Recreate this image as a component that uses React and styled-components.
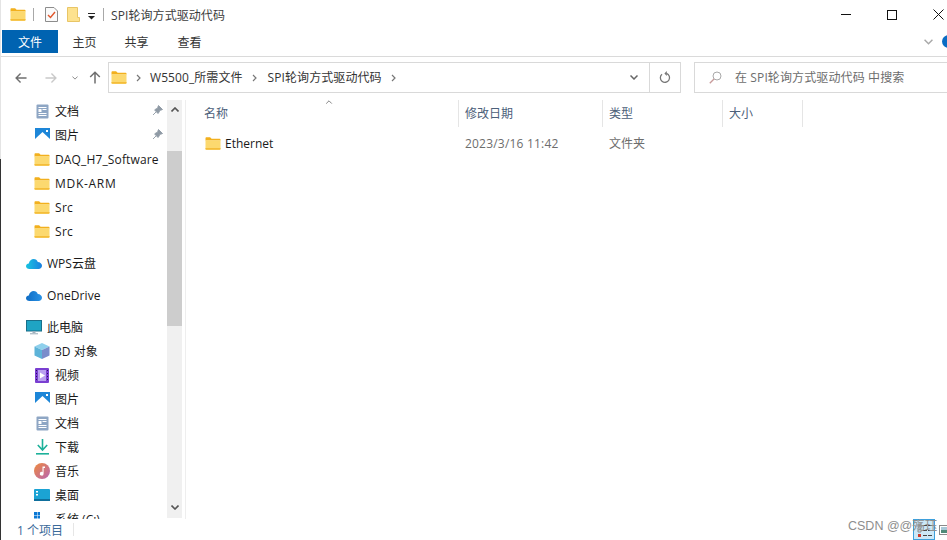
import React from 'react';
import styled, { createGlobalStyle } from 'styled-components';

const GlobalStyle = createGlobalStyle`
html, body {
  margin: 0;
  padding: 0;
  background: #fff;
  overflow: hidden;
}
* { box-sizing: border-box; }
`;

const Page = styled.div`
width: 947px;
height: 540px;
position: relative;
overflow: hidden;
display: flex;
flex-direction: column;
background: #fff;
color: #1a1a1a;
font-family: "Open Sans", "Noto Sans CJK SC", sans-serif;
font-size: 12px;
`;

const LeftEdge = styled.div`
position: absolute;
left: 0;
top: ${p => p.$top}px;
height: ${p => p.$h}px;
width: 1px;
background: ${p => p.$color};
`;

const TitleBar = styled.div`
height: 29px;
flex: none;
display: flex;
align-items: center;
padding-left: 10px;
`;

const TitleDivider = styled.div`
width: 1px;
height: 13px;
background: #a8a8a8;
margin: ${p => p.$margin};
`;

const TitleText = styled.div`
margin-left: 7px;
color: #3c3c3c;
white-space: nowrap;
letter-spacing: .08px;
`;

const WindowButtons = styled.div`
margin-left: auto;
margin-right: -14px;
display: flex;
height: 100%;
`;

const WindowButton = styled.div`
width: 46px;
display: flex;
align-items: center;
justify-content: center;
`;

const RibbonTabs = styled.div`
height: 28px;
flex: none;
display: flex;
align-items: flex-start;
padding: 1px 0 0 2px;
border-bottom: 1px solid #dadada;
position: relative;
`;

const FileTab = styled.div`
width: 56px;
height: 23px;
background: #0063b1;
color: #fff;
display: flex;
align-items: center;
justify-content: center;
`;

const Tab = styled.div`
width: 53px;
height: 23px;
display: flex;
align-items: center;
justify-content: center;
color: #333;
margin-left: ${p => p.$shift || 0}px;
`;

const RibbonEnd = styled.div`
margin-left: auto;
height: 23px;
display: flex;
align-items: center;
gap: 9px;
margin-right: -8px;
`;

const HelpDot = styled.div`
width: 13px;
height: 13px;
border-radius: 50%;
background: #0a6cc4;
`;

const AddressRow = styled.div`
height: 43px;
flex: none;
display: flex;
align-items: flex-start;
padding-top: 5px;
`;

const NavButtons = styled.div`
width: 108px;
height: 31px;
flex: none;
display: flex;
align-items: center;
padding-left: 15px;
`;

const NavSpacer = styled.span`
width: ${p => p.$w}px;
flex: none;
`;

const AddressBox = styled.div`
width: 573px;
height: 31px;
flex: none;
border: 1px solid #d9d9d9;
display: flex;
align-items: center;
padding-left: 2px;
`;

const Crumb = styled.span`
color: #333;
white-space: nowrap;
margin: -2px 0 0 ${p => p.$gap}px;
letter-spacing: .08px;
`;

const AddressChevron = styled.div`
margin-left: auto;
width: 30px;
height: 100%;
display: flex;
align-items: center;
justify-content: center;
`;

const RefreshButton = styled.div`
width: 31px;
height: 100%;
border-left: 1px solid #d9d9d9;
display: flex;
align-items: center;
justify-content: center;
`;

const SearchBox = styled.div`
margin-left: 13px;
flex: 1;
height: 31px;
border: 1px solid #d9d9d9;
border-right: none;
display: flex;
align-items: center;
padding-left: 14px;
gap: 13px;
color: #6d6d6d;
white-space: nowrap;
`;

const SearchText = styled.span`
margin-top: -2px;
letter-spacing: .12px;
`;

const Body = styled.div`
flex: 1;
min-height: 0;
display: flex;
`;

const NavPane = styled.div`
width: 186px;
flex: none;
display: flex;
border-right: 1px solid #eeeeee;
`;

const NavList = styled.div`
width: 167px;
flex: none;
overflow: hidden;
`;

const NavInner = styled.div`
margin-top: -1px;
`;

const NavGroup = styled.div`
margin-bottom: 8px;
`;

const NavRow = styled.div`
height: 24px;
display: flex;
align-items: center;
padding-left: ${p => (p.$root ? 25 : 33)}px;
white-space: nowrap;
position: relative;
color: #1a1a1a;
letter-spacing: ${p => p.$track || 0}px;
`;

const NavIcon = styled.span`
width: 18px;
height: 18px;
flex: none;
margin-right: 4px;
display: flex;
align-items: center;
justify-content: center;
`;

const PinMark = styled.span`
position: absolute;
right: 4px;
top: 6px;
display: flex;
`;

const ScrollBar = styled.div`
width: 15px;
flex: none;
height: 418px;
background: #f0f0f0;
display: flex;
flex-direction: column;
`;

const ScrollCap = styled.div`
height: ${p => p.$h}px;
flex: none;
display: flex;
justify-content: center;
padding-top: ${p => p.$top}px;
`;

const ScrollThumb = styled.div`
height: 175px;
flex: none;
background: #cdcdcd;
`;

const ScrollRest = styled.div`
flex: 1;
`;

const Content = styled.div`
flex: 1;
min-width: 0;
position: relative;
`;

const ColumnHead = styled.div`
height: 27px;
display: flex;
color: #4c607a;
`;

const HeadCell = styled.div`
width: ${p => p.$w}px;
flex: none;
border-right: 1px solid #e5e5e5;
display: flex;
align-items: center;
padding: 0 0 2px ${p => p.$pad}px;
`;

const SortMark = styled.span`
position: absolute;
left: 139px;
top: 0;
display: flex;
`;

const FileRow = styled.div`
height: 24px;
margin-top: 4px;
display: flex;
align-items: center;
`;

const FileCell = styled.div`
width: ${p => p.$w}px;
flex: none;
display: flex;
align-items: center;
padding-left: ${p => p.$pad}px;
gap: 4px;
color: ${p => (p.$muted ? '#6d6d6d' : '#1a1a1a')};
white-space: nowrap;
letter-spacing: ${p => p.$track || 0}px;
`;

const StatusBar = styled.div`
height: 21px;
flex: none;
display: flex;
align-items: center;
padding-left: 17px;
color: #3b6a9a;
background: #fff;
`;

const StatusDivider = styled.div`
width: 1px;
height: 13px;
background: #e6e6e6;
margin-left: 10px;
`;

const Watermark = styled.div`
position: absolute;
left: 848px;
top: 515px;
color: #8e8e8e;
font-family: "Liberation Sans", "Noto Sans CJK SC", sans-serif;
font-size: 12.5px;
white-space: nowrap;
`;

const ViewButtons = styled.div`
position: absolute;
left: 913px;
top: 519px;
display: flex;
align-items: center;
gap: 4px;
`;

const Folder = ({ size = 16 }) => (
  <svg width={size} height={size * 0.8125} viewBox="0 0 16 13">
    <path d="M0.5 2V1.2C0.5 .6 1 .3 1.5 .3h3.6l1.5 1.4h8c.6 0 .9.4.9.9V3.5H.5z" fill="#f2b01e" />
    <path d="M.5 3.2h15v8.7c0 .5-.4.8-.8.8H1.3c-.5 0-.8-.3-.8-.8z" fill="#fcd96f" />
    <path d="M.5 11h15v.9c0 .5-.4.8-.8.8H1.3c-.5 0-.8-.3-.8-.8z" fill="#f4bd3a" />
  </svg>
);

const DocIcon = () => (
  <svg width="13" height="15" viewBox="0 0 13 15">
    <rect x=".5" y=".5" width="12" height="14" rx="1" fill="#8ea6c4" />
    <rect x="2.5" y="3" width="8" height="1" fill="#fff" />
    <rect x="6.5" y="5" width="4" height="1" fill="#fff" />
    <rect x="2.5" y="5" width="3" height="3" fill="#fff" />
    <rect x="2.5" y="9" width="8" height="1" fill="#fff" />
    <rect x="2.5" y="11" width="8" height="1" fill="#fff" />
  </svg>
);

const PictureIcon = () => (
  <svg width="15" height="14" viewBox="0 0 15 14">
    <rect width="15" height="14" fill="#1d86d8" />
    <path d="M0 11 7.5 4 15 11v3H0z" fill="#fff" />
    <rect x="11" y="2" width="2" height="2" fill="#fff" />
  </svg>
);

const PinIcon = () => (
  <svg width="11" height="11" viewBox="0 0 11 11">
    <path d="M6.5.5 10.5 4.5 9.3 5 8 5.2 6.6 7.8 6 8.5 2.6 5 3.2 4.4 5.8 3 6 1.7zM4 7 1 10" fill="#8f9aa5" stroke="#8f9aa5" strokeWidth=".9" />
  </svg>
);

const CloudIcon = ({ from, to }) => (
  <svg width="16" height="11" viewBox="0 0 16 11">
    <defs>
      <linearGradient id={`cloud${from.slice(1)}`} x1="0" y1="0" x2="1" y2="0">
        <stop offset="0" stopColor={from} />
        <stop offset="1" stopColor={to} />
      </linearGradient>
    </defs>
    <path d="M3.4 11C1.5 11 0 9.8 0 8.2 0 6.6 1.3 5.5 2.8 5.4 3.4 2.6 5.4 1 7.6 1c2 0 3.6 1.2 4.2 3 2.3.1 4.2 1.7 4.2 3.8 0 1.9-1.5 3.2-3.4 3.2z" fill={`url(#cloud${from.slice(1)})`} />
  </svg>
);

const MonitorIcon = () => (
  <svg width="16" height="15" viewBox="0 0 16 15">
    <rect x=".5" y=".5" width="15" height="10.5" fill="#1fa4c4" stroke="#1a6f8a" />
    <rect x="6.5" y="11" width="3" height="2" fill="#9eb0bd" />
    <rect x="4" y="13" width="8" height="1.4" fill="#b4c1ca" />
  </svg>
);

const CubeIcon = () => (
  <svg width="16" height="16" viewBox="0 0 16 16">
    <path d="M8 0 15.5 3.5 8 7 .5 3.5z" fill="#8fd0ec" />
    <path d="M.5 3.5 8 7v9L.5 12.5z" fill="#5db3d8" />
    <path d="M15.5 3.5 8 7v9l7.5-3.5z" fill="#7a8ccb" />
  </svg>
);

const VideoIcon = () => (
  <svg width="14" height="15" viewBox="0 0 14 15">
    <rect width="14" height="15" rx="1" fill="#7a3fd1" />
    <rect x="3" y="2" width="8" height="11" fill="#b9a0ef" />
    <path d="M5 4.5 10 7.5 5 10.5z" fill="#fff" />
    <path d="M1 2h1v1H1zM1 5h1v1H1zM1 8h1v1H1zM1 11h1v1H1zM12 2h1v1h-1zM12 5h1v1h-1zM12 8h1v1h-1zM12 11h1v1h-1z" fill="#2b1060" />
  </svg>
);

const DownloadIcon = () => (
  <svg width="13" height="16" viewBox="0 0 13 16">
    <path d="M6.5 0v10.5M1.8 6 6.5 11 11.2 6" fill="none" stroke="#1db19a" strokeWidth="1.6" />
    <rect y="14" width="13" height="1.6" fill="#1db19a" />
  </svg>
);

const MusicIcon = () => (
  <svg width="16" height="16" viewBox="0 0 16 16">
    <defs>
      <linearGradient id="musicFill" x1="0" y1="0" x2="1" y2="1">
        <stop offset="0" stopColor="#ef8a3c" />
        <stop offset="1" stopColor="#b765b5" />
      </linearGradient>
    </defs>
    <circle cx="8" cy="8" r="8" fill="url(#musicFill)" />
    <path d="M8.5 3.5h2.5v1.6H9.6v5.6a1.9 1.9 0 1 1-1.1-1.7z" fill="#fff" />
  </svg>
);

const DesktopIcon = () => (
  <svg width="16" height="12" viewBox="0 0 16 12">
    <rect width="16" height="12" rx="1" fill="#1ba3d4" />
    <rect y="10" width="16" height="2" fill="#0f6f9c" />
    <path d="M2 2h2v1.5H2zM2 5h2v1.5H2z" fill="#fff" />
  </svg>
);

const DriveIcon = () => (
  <svg width="16" height="14" viewBox="0 0 16 14">
    <path d="M0 0h3v3H0zM3.5 0h2.5v3H3.5zM0 3.5h3v3H0zM3.5 3.5h2.5v3H3.5z" fill="#0a78d4" />
    <rect y="8" width="16" height="5" fill="#d6d9de" />
  </svg>
);

const ArrowLeft = ({ color }) => (
  <svg width="12" height="12" viewBox="0 0 13 12">
    <path d="M12.5 6H1.5M6 1.2 1.2 6 6 10.8" fill="none" stroke={color} strokeWidth="1.5" />
  </svg>
);

const ArrowRight = ({ color }) => (
  <svg width="12" height="12" viewBox="0 0 13 12">
    <path d="M.5 6h11M7 1.2 11.8 6 7 10.8" fill="none" stroke={color} strokeWidth="1.5" />
  </svg>
);

const ArrowUp = ({ color }) => (
  <svg width="12" height="13" viewBox="0 0 12 13">
    <path d="M6 12.5V1.5M1.2 6 6 1.2 10.8 6" fill="none" stroke={color} strokeWidth="1.5" />
  </svg>
);

const Chevron = ({ w = 8, h = 5, color = '#777', up, sw = 1.3 }) => (
  <svg width={w} height={h} viewBox="0 0 8 5">
    <path d={up ? 'M.5 4.5 4 1 7.5 4.5' : 'M.5 .5 4 4 7.5 .5'} fill="none" stroke={color} strokeWidth={sw} />
  </svg>
);

const CrumbArrow = styled(({ className }) => (
  <svg className={className} width="5" height="8" viewBox="0 0 5 8">
    <path d="M1 1 4 4 1 7" fill="none" stroke="#777" strokeWidth="1.2" />
  </svg>
))`
flex: none;
margin-left: 9px;
`;

const TitleDocIcon = () => (
  <svg width="13" height="15" viewBox="0 0 13 15">
    <path d="M.5 .5h8.5l3.5 3.5v10.5H.5z" fill="#fafafa" stroke="#8c8c8c" />
    <path d="M3 8 5.5 10.5 10 5" fill="none" stroke="#e0552a" strokeWidth="1.4" />
  </svg>
);

const TitleNoteIcon = styled(({ className }) => (
  <svg className={className} width="13" height="15" viewBox="0 0 13 15">
    <path d="M.5 .5h10v10l2 0v4H.5z" fill="#fde28e" stroke="#e8c566" />
  </svg>
))`
margin-left: 9px;
`;

const TitleDropIcon = styled(({ className }) => (
  <svg className={className} width="7" height="7" viewBox="0 0 7 7">
    <rect width="7" height="1" fill="#222" />
    <path d="M0 3h7L3.5 6.5z" fill="#222" />
  </svg>
))`
margin: 3px 0 0 8px;
`;

const ThumbIcon = styled(({ className }) => (
  <svg className={className} width="12" height="10" viewBox="0 0 12 10">
    <rect x=".5" y=".5" width="11" height="9" fill="#fff" stroke="#8a8a8a" />
    <rect x="2" y="2" width="8" height="3" fill="#a8c8d8" />
    <rect x="2" y="5" width="8" height="3" fill="#4f8a78" />
  </svg>
))`
flex: none;
`;

const quickItems = [
  { label: '文档', icon: <DocIcon />, pinned: true },
  { label: '图片', icon: <PictureIcon />, pinned: true },
  { label: 'DAQ_H7_Software', icon: <Folder size={16} />, track: 0.14 },
  { label: 'MDK-ARM', icon: <Folder size={16} />, track: 0.7 },
  { label: 'Src', icon: <Folder size={16} />, track: 0.3 },
  { label: 'Src', icon: <Folder size={16} />, track: 0.3 },
];

const pcItems = [
  { label: '3D 对象', icon: <CubeIcon /> },
  { label: '视频', icon: <VideoIcon /> },
  { label: '图片', icon: <PictureIcon /> },
  { label: '文档', icon: <DocIcon /> },
  { label: '下载', icon: <DownloadIcon /> },
  { label: '音乐', icon: <MusicIcon /> },
  { label: '桌面', icon: <DesktopIcon /> },
  { label: '系统 (C:)', icon: <DriveIcon /> },
];

const NavItem = ({ item }) => (
  <NavRow $track={item.track}>
    <NavIcon>{item.icon}</NavIcon>
    {item.label}
    {item.pinned && <PinMark><PinIcon /></PinMark>}
  </NavRow>
);

const RootItem = ({ icon, label, track }) => (
  <NavRow $root $track={track}>
    <NavIcon>{icon}</NavIcon>
    {label}
  </NavRow>
);

const App = () => (
  <Page>
    <GlobalStyle />
    <TitleBar>
      <Folder size={16} />
      <TitleDivider $margin="0 11px 0 7px" />
      <TitleDocIcon />
      <TitleNoteIcon />
      <TitleDropIcon />
      <TitleDivider $margin="0 0 0 8px" />
      <TitleText>SPI轮询方式驱动代码</TitleText>
      <WindowButtons>
        <WindowButton>
          <svg width="10" height="1"><rect width="10" height="1" fill="#111" /></svg>
        </WindowButton>
        <WindowButton>
          <svg width="10" height="10"><rect x=".5" y=".5" width="9" height="9" fill="none" stroke="#111" /></svg>
        </WindowButton>
        <WindowButton>
          <svg width="11" height="11"><path d="M.5 .5 10.5 10.5M10.5 .5 .5 10.5" stroke="#111" /></svg>
        </WindowButton>
      </WindowButtons>
    </TitleBar>
    <RibbonTabs>
      <FileTab>文件</FileTab>
      <Tab>主页</Tab>
      <Tab $shift={-1}>共享</Tab>
      <Tab>查看</Tab>
      <RibbonEnd>
        <Chevron w={9} h={6} color="#a9a9a9" />
        <HelpDot />
      </RibbonEnd>
    </RibbonTabs>
    <AddressRow>
      <NavButtons>
        <ArrowLeft color="#6f6f6f" />
        <NavSpacer $w={18} />
        <ArrowRight color="#c9c9c9" />
        <NavSpacer $w={15} />
        <Chevron w={6} h={4} color="#8a8a8a" />
        <NavSpacer $w={11} />
        <ArrowUp color="#6f6f6f" />
      </NavButtons>
      <AddressBox>
        <Folder size={16} />
        <CrumbArrow />
        <Crumb $gap={9}>W5500_所需文件</Crumb>
        <CrumbArrow />
        <Crumb $gap={11}>SPI轮询方式驱动代码</Crumb>
        <CrumbArrow />
        <AddressChevron><Chevron w={8} h={5} color="#666" sw={1.5} /></AddressChevron>
        <RefreshButton>
          <svg width="12" height="13" viewBox="0 0 12 13">
            <path d="M7.5 2.4A4.6 4.6 0 1 1 3 3.2" fill="none" stroke="#777" strokeWidth="1.3" />
            <path d="M7.8 0 5.4 2.5 7.8 5z" fill="#777" />
          </svg>
        </RefreshButton>
      </AddressBox>
      <SearchBox>
        <svg width="13" height="13" viewBox="0 0 13 13">
          <circle cx="8" cy="5" r="4" fill="none" stroke="#a9a9a9" />
          <path d="M5 8 .8 12.2" stroke="#c89a9a" strokeWidth="1.3" />
        </svg>
        <SearchText>在 SPI轮询方式驱动代码 中搜索</SearchText>
      </SearchBox>
    </AddressRow>
    <Body>
      <NavPane>
        <NavList>
          <NavInner>
            <NavGroup>
              {quickItems.map((item, i) => <NavItem key={i} item={item} />)}
            </NavGroup>
            <NavGroup>
              <RootItem icon={<CloudIcon from="#18c4e0" to="#1a7fe0" />} label="WPS云盘" />
            </NavGroup>
            <NavGroup>
              <RootItem icon={<CloudIcon from="#0f6cc4" to="#2a93e6" />} label="OneDrive" track={0.1} />
            </NavGroup>
            <RootItem icon={<MonitorIcon />} label="此电脑" />
            {pcItems.map((item, i) => <NavItem key={i} item={item} />)}
          </NavInner>
        </NavList>
        <ScrollBar>
          <ScrollCap $h={51} $top={7}><Chevron w={8} h={5} color="#555" up sw={1.6} /></ScrollCap>
          <ScrollThumb />
          <ScrollRest />
          <ScrollCap $h={17} $top={4}><Chevron w={8} h={5} color="#555" sw={1.6} /></ScrollCap>
        </ScrollBar>
      </NavPane>
      <Content>
        <SortMark><Chevron w={8} h={4} color="#666" up sw={1} /></SortMark>
        <ColumnHead>
          <HeadCell $w={273} $pad={18}>名称</HeadCell>
          <HeadCell $w={144} $pad={6}>修改日期</HeadCell>
          <HeadCell $w={120} $pad={6}>类型</HeadCell>
          <HeadCell $w={80} $pad={6}>大小</HeadCell>
        </ColumnHead>
        <FileRow>
          <FileCell $w={273} $pad={19}><Folder size={16} />Ethernet</FileCell>
          <FileCell $w={144} $pad={6} $muted $track={0.2}>2023/3/16 11:42</FileCell>
          <FileCell $w={120} $pad={6} $muted>文件夹</FileCell>
        </FileRow>
      </Content>
    </Body>
    <StatusBar>
      1 个项目
      <StatusDivider />
    </StatusBar>
    <LeftEdge $top={0} $h={159} $color="#e4e4e4" />
    <LeftEdge $top={159} $h={381} $color="#333" />
    <ViewButtons>
      <svg width="22" height="21" viewBox="0 0 22 21">
        <rect x=".5" y=".5" width="21" height="20" fill="#cce8f7" stroke="#3ea0dc" />
        <path d="M5 5h3v3H5zM5 10h3v3H5z" fill="none" stroke="#8a8a8a" />
        <rect x="5" y="15" width="3" height="3" fill="#d03a2a" />
        <path d="M10 6.5h9M10 11.5h9M10 16.5h9" stroke="#444" strokeDasharray="4 1" />
      </svg>
      <ThumbIcon />
    </ViewButtons>
    <Watermark>CSDN @@殇珏</Watermark>
  </Page>
);

export default App;
